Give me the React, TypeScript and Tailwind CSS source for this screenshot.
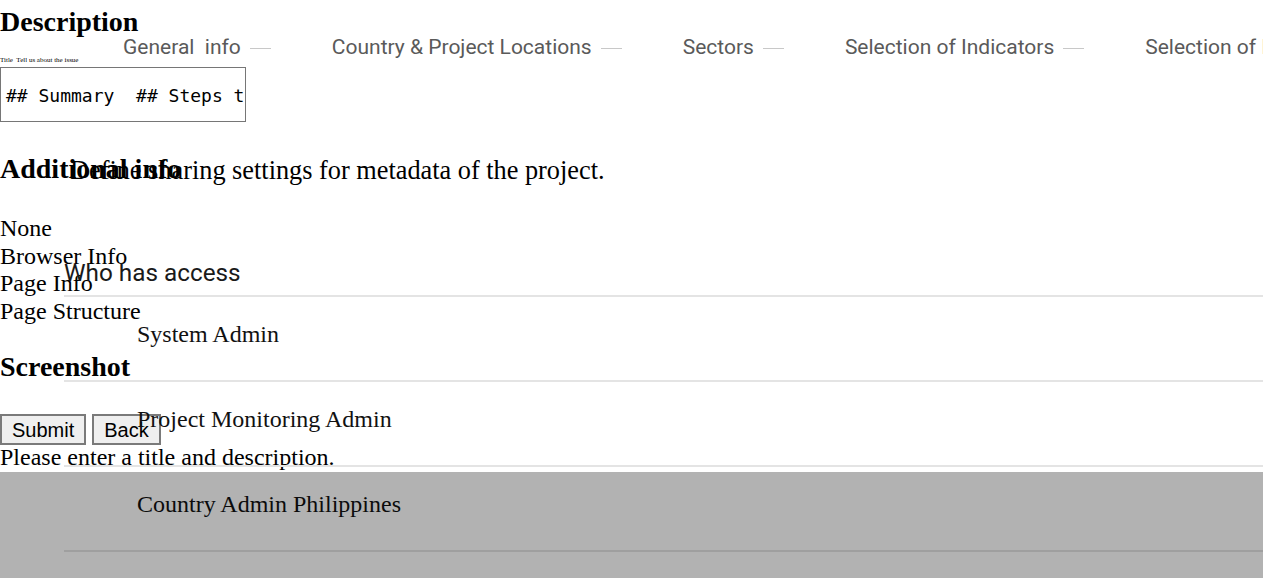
import React from "react";

const steps = [
  "General  info",
  "Country & Project Locations",
  "Sectors",
  "Selection of Indicators",
  "Selection of Indicator Values",
];

const rows = ["System Admin", "Project Monitoring Admin", "Country Admin Philippines"];

export default function App() {
  return (
    <div className="relative h-[578px] w-[1263px] overflow-hidden bg-white text-black [font-family:'Liberation_Serif',serif]">
      {/* base document */}
      <div className="flex flex-col items-start text-[24px] leading-[27.6px]">
        <h3 className="mt-[6px] text-[28px] font-bold leading-[32px]">Description</h3>
        <div className="mt-[18px] text-[7px] leading-[8px] whitespace-pre">Title  Tell us about the issue</div>
        <textarea
          readOnly
          value={"## Summary  ## Steps to reproduce"}
          className="mt-[3px] h-[55px] w-[246px] resize-none overflow-hidden whitespace-pre border border-[#767676] px-[5px] pt-[17px] text-[18px] leading-[22px] text-black [font-family:'DejaVu_Sans_Mono',monospace]"
        />
        <h3 className="mt-[31px] text-[28px] font-bold leading-[32px]">Additional info</h3>
        <div className="mt-[30px] flex flex-col">
          <div>None</div>
          <div>Browser Info</div>
          <div>Page Info</div>
          <div>Page Structure</div>
        </div>
        <h3 className="mt-[26px] text-[28px] font-bold leading-[32px]">Screenshot</h3>
        <div className="mt-[31px] flex gap-[6px] [font-family:'Liberation_Sans',sans-serif]">
          <button className="h-[31px] border-2 border-[#7a7a7a] bg-[#efefef] px-[10px] text-[20px] leading-[20px] text-black">
            Submit
          </button>
          <button className="h-[31px] border-2 border-[#7a7a7a] bg-[#efefef] px-[10px] text-[20px] leading-[20px] text-black">
            Back
          </button>
        </div>
        <div className="-mt-px">Please enter a title and description.</div>
      </div>

      {/* overlaid sharing dialog */}
      <div className="absolute inset-0">
        <div className="mt-[35px] ml-[123px] flex whitespace-nowrap text-[21px] leading-[24px] text-[#5a5a5a] [font-family:Roboto,sans-serif]">
          {steps.map((s) => (
            <div key={s} className="mr-[61px] flex items-center">
              <span className="whitespace-pre">{s}</span>
              <span className="ml-[9px] mt-[2px] inline-block h-px w-[21px] bg-[#c8c8c8]" />
            </div>
          ))}
        </div>
        <div className="mt-[97px] ml-[70px] text-[26.3px] leading-[30px]">
          Define sharing settings for metadata of the project.
        </div>
        <div className="ml-[64px] mt-[73px] flex flex-col">
          <div className="border-b-2 border-[#e4e4e4] pb-[8px] text-[24.3px] leading-[28px] text-[#1a1a1a] [font-family:Roboto,sans-serif]">
            Who has access
          </div>
          {rows.map((r) => (
            <div
              key={r}
              className="h-[85px] border-b-2 border-[#e4e4e4] pl-[73px] pt-[24px] text-[24px] leading-[27.6px] text-[#111]"
            >
              {r}
            </div>
          ))}
        </div>
      </div>

      {/* backdrop */}
      <div className="absolute left-0 right-0 top-[472px] bottom-0 bg-black/30" />
    </div>
  );
}
